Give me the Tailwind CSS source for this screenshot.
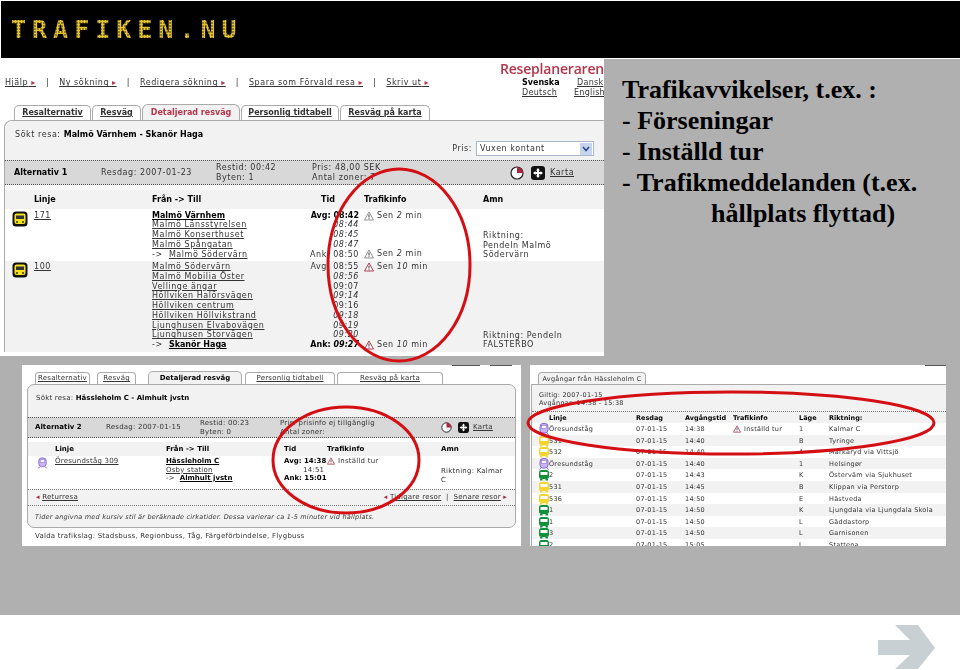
<!DOCTYPE html>
<html lang="sv">
<head>
    <meta charset="UTF-8">
    <title>Trafikavvikelser</title>
    <script src="https://cdn.jsdelivr.net/npm/@tailwindcss/browser@4"></script>
</head>
<body class="bg-white">
    <svg class="hidden" xmlns="http://www.w3.org/2000/svg">
        <symbol id="bus-badge" viewBox="0 0 16 16">
            <rect x="0.5" y="0.5" width="15" height="15" rx="3.5" fill="#111"/>
            <rect x="2.5" y="2.5" width="11" height="10.5" rx="2" fill="#f6e21e"/>
            <rect x="4" y="4.5" width="8" height="3.5" fill="#333"/>
            <circle cx="5" cy="11" r="1" fill="#333"/>
            <circle cx="11" cy="11" r="1" fill="#333"/>
        </symbol>
        <symbol id="bus" viewBox="0 0 12 12">
            <rect x="1" y="1" width="10" height="9" rx="2.5" fill="currentColor"/>
            <rect x="2.5" y="3" width="7" height="3" fill="#fff"/>
            <rect x="2" y="10" width="2.5" height="1.5" fill="currentColor"/>
            <rect x="7.5" y="10" width="2.5" height="1.5" fill="currentColor"/>
        </symbol>
        <symbol id="train" viewBox="0 0 12 12">
            <rect x="2" y="0.5" width="8" height="9.5" rx="3" fill="#c9b6f0" stroke="#8a68d6"/>
            <rect x="3.5" y="2.5" width="5" height="3" fill="#fff" stroke="#8a68d6" stroke-width="0.6"/>
            <path d="M3 10 1.5 11.8M9 10l1.5 1.8" stroke="#8a68d6" fill="none"/>
        </symbol>
        <symbol id="warn" viewBox="0 0 10 10">
            <path d="M5 1 9.5 9h-9z" fill="#fff" stroke="currentColor" stroke-width="0.9"/>
            <path d="M5 3.5v3M5 7.3v.9" stroke="#222" stroke-width="0.9" fill="none"/>
        </symbol>
        <symbol id="clock" viewBox="0 0 14 14">
            <circle cx="7" cy="7" r="6" fill="#fff" stroke="#222" stroke-width="1.2"/>
            <path d="M7 7V1a6 6 0 0 1 6 6z" fill="#a8283c"/>
        </symbol>
        <symbol id="map" viewBox="0 0 14 14">
            <rect width="14" height="14" rx="3" fill="#111"/>
            <path d="M7 2 9 4.500H8V6h1.500V5L12 7 9.500 9V8H8v1.500h1L7 12 5 9.500h1V8H4.500v1L2 7l2.500-2v1H6V4.500H5z" fill="#fff"/>
        </symbol>
    </svg>

    <div class="relative w-[960px] h-[670px] overflow-hidden font-['Liberation_Sans',sans-serif]">
        <header class="h-[57px] mt-px ml-px bg-black flex items-center pl-[10px]">
            <span class="font-['DejaVu_Sans_Mono',monospace] font-bold text-[25px] leading-none tracking-[6px] text-transparent bg-clip-text bg-[radial-gradient(circle,#e6c436_62%,transparent_75%)] bg-[size:3px_3px]">TRAFIKEN.NU</span>
        </header>

        <div class="mt-px h-[556px] bg-[#b0b0b0] font-['DejaVu_Sans',sans-serif] text-[#333]">
            <div class="flex h-[297px]">
                <!-- Reseplaneraren, resa 1 -->
                <section class="w-[604px] shrink-0 bg-white overflow-hidden text-[8px] leading-[9.75px] tracking-[0.55px] blur-[0.35px]">
                    <div class="h-[45px] flex justify-between">
                        <nav class="flex items-end gap-[10px] pl-[5px] pb-[16px] whitespace-nowrap">
                            <a class="underline">Hjälp<span class="text-[#b5354a]"> ▸</span></a><span>|</span>
                            <a class="underline">Ny sökning<span class="text-[#b5354a]"> ▸</span></a><span>|</span>
                            <a class="underline">Redigera sökning<span class="text-[#b5354a]"> ▸</span></a><span>|</span>
                            <a class="underline">Spara som Förvald resa<span class="text-[#b5354a]"> ▸</span></a><span>|</span>
                            <a class="underline">Skriv ut<span class="text-[#b5354a]"> ▸</span></a>
                        </nav>
                        <div class="w-[104px] shrink-0 pt-[2px]">
                            <div class="font-semibold text-[14px] leading-[16px] text-[#b5354a] font-['Open_Sans',sans-serif] whitespace-nowrap tracking-[-0.2px]">Reseplaneraren</div>
                            <div class="grid grid-cols-[55px_1fr] mt-[1px] pl-[22px] leading-[9.5px] tracking-[0.3px]">
                                <span class="font-bold text-black tracking-normal">Svenska</span><a class="underline">Dansk</a>
                                <a class="underline">Deutsch</a><a class="underline -ml-[3px]">English</a>
                            </div>
                        </div>
                    </div>
                    <div class="h-[16px] flex items-end gap-px pl-[14px] font-bold tracking-normal">
                        <a class="w-[77px] h-[15px] flex items-center justify-center border border-b-0 border-[#aaa] rounded-t-[5px] underline">Resalternativ</a>
                        <a class="w-[49px] h-[15px] flex items-center justify-center border border-b-0 border-[#aaa] rounded-t-[5px] underline">Resväg</a>
                        <a class="w-[98px] h-[16px] flex items-center justify-center bg-[#f2f2f2] border border-b-0 border-[#aaa] rounded-t-[6px] text-[#b5354a]">Detaljerad resväg</a>
                        <a class="w-[98px] h-[15px] flex items-center justify-center border border-b-0 border-[#aaa] rounded-t-[5px] underline">Personlig tidtabell</a>
                        <a class="w-[90px] h-[15px] flex items-center justify-center border border-b-0 border-[#aaa] rounded-t-[5px] underline">Resväg på karta</a>
                    </div>
                    <div class="w-[606px] ml-[4px] bg-white border-l border-t border-[#aaa] rounded-tl-[8px] rounded-tr-[8px]">
                        <div class="h-[39px] bg-[#f2f2f2] rounded-tl-[8px] flex justify-between">
                            <p class="pl-[10px] pt-[9px]">Sökt resa: <b class="text-black tracking-normal">Malmö Värnhem - Skanör Haga</b></p>
                            <div class="self-end flex items-center gap-[4px] pb-[4px] pr-[16px]">
                                <span>Pris:</span>
                                <div class="w-[118px] h-[15px] bg-white border border-[#a9b7c9] flex items-center justify-between pl-[3px] pr-px">
                                    <span>Vuxen kontant</span>
                                    <span class="w-[12px] h-[12px] bg-[#c5d5ee] flex items-center justify-center">
                                        <svg width="8" height="6" viewBox="0 0 8 6"><path d="M1 1 4 4.500 7 1" fill="none" stroke="#2b4b8c" stroke-width="1.6"/></svg>
                                    </span>
                                </div>
                            </div>
                        </div>
                        <div class="h-[25px] bg-[#d8d8d8] border-y border-dotted border-[#555] flex items-center pl-[9px]">
                            <b class="w-[87px] text-black tracking-normal">Alternativ 1</b>
                            <span class="w-[115px]">Resdag: 2007-01-23</span>
                            <span class="w-[96px]">Restid: 00:42<br>Byten: 1</span>
                            <span class="w-[198px]">Pris: 48,00 SEK<br>Antal zoner: 7</span>
                            <svg class="w-[14px] h-[14px] mr-[7px]"><use href="#clock"/></svg>
                            <svg class="w-[14px] h-[14px] mr-[5px]"><use href="#map"/></svg>
                            <a class="underline">Karta</a>
                        </div>
                        <div class="h-[5px] bg-[#f8f8f8]"></div>
                        <div class="grid grid-cols-[29px_118px_156px_54px_121px_1fr] h-[19px] items-center bg-[#f2f2f2] font-bold text-black tracking-normal">
                            <span></span><span>Linje</span><span>Från -&gt; Till</span><span class="pl-[13px]">Tid</span><span class="pl-[2px]">Trafikinfo</span><span>Amn</span>
                        </div>
                        <div class="grid grid-cols-[29px_118px_156px_54px_121px_1fr] h-[52px] pt-[1.6px]">
                            <svg class="w-[16px] h-[16px] ml-[7px]"><use href="#bus-badge"/></svg>
                            <a class="underline">171</a>
                            <div class="flex flex-col items-start">
                                <a class="underline font-bold text-black tracking-normal">Malmö Värnhem</a><a class="underline">Malmö Länsstyrelsen</a><a class="underline">Malmö Konserthuset</a><a class="underline">Malmö Spångatan</a>
                                <span>-&gt; &nbsp;<a class="underline">Malmö Södervärn</a></span>
                            </div>
                            <div class="flex flex-col text-right pr-[3px] whitespace-nowrap">
                                <b class="text-black tracking-normal">Avg: 08:42</b><i>08:44</i><i>08:45</i><i>08:47</i><span>Ank: 08:50</span>
                            </div>
                            <div class="flex flex-col pl-[2px]">
                                <span class="flex items-center gap-[3px]"><svg class="w-[10px] h-[10px] text-[#888]"><use href="#warn"/></svg><span>Sen <i>2</i> min</span></span>
                                <span class="mt-auto mb-[2px] flex items-center gap-[3px]"><svg class="w-[10px] h-[10px] text-[#888]"><use href="#warn"/></svg><span>Sen <i>2</i> min</span></span>
                            </div>
                            <div class="flex flex-col justify-end pb-[1px]"><p>Riktning:<br>Pendeln Malmö<br>Södervärn</p></div>
                        </div>
                        <div class="grid grid-cols-[29px_118px_156px_54px_121px_1fr] h-[91px] pt-px bg-[#f2f2f2]">
                            <svg class="w-[16px] h-[16px] ml-[7px]"><use href="#bus-badge"/></svg>
                            <a class="underline">100</a>
                            <div class="flex flex-col items-start">
                                <a class="underline">Malmö Södervärn</a><a class="underline">Malmö Mobilia Öster</a><a class="underline">Vellinge ängar</a><a class="underline">Höllviken Halörsvägen</a><a class="underline">Höllviken centrum</a><a class="underline">Höllviken Höllvikstrand</a><a class="underline">Ljunghusen Elvabovägen</a><a class="underline">Ljunghusen Storvägen</a>
                                <span>-&gt; &nbsp;<a class="underline font-bold text-black tracking-normal">Skanör Haga</a></span>
                            </div>
                            <div class="flex flex-col text-right pr-[3px] whitespace-nowrap">
                                <span>Avg: 08:55</span><i>08:56</i><span>09:07</span><i>09:14</i><span>09:16</span><i>09:18</i><i>09:19</i><i>09:20</i><b class="text-black tracking-normal">Ank: <i>09:27</i></b>
                            </div>
                            <div class="flex flex-col pl-[2px]">
                                <span class="flex items-center gap-[3px]"><svg class="w-[10px] h-[10px] text-[#a8283c]"><use href="#warn"/></svg><span>Sen <i>10</i> min</span></span>
                                <span class="mt-auto mb-[2px] flex items-center gap-[3px]"><svg class="w-[10px] h-[10px] text-[#a8283c]"><use href="#warn"/></svg><span>Sen <i>10</i> min</span></span>
                            </div>
                            <div class="flex flex-col justify-end pb-[2px]"><p>Riktning: Pendeln<br>FALSTERBO</p></div>
                        </div>
                    </div>
                </section>

                <section class="flex-1 pl-[18px] pt-[15px] font-['Liberation_Serif',serif] font-bold text-[26px] leading-[31px] text-black whitespace-nowrap">
                    <p>Trafikavvikelser, t.ex. :</p>
                    <p>- Förseningar</p>
                    <p>- Inställd tur</p>
                    <p>- Trafikmeddelanden (t.ex.</p>
                    <p class="pl-[89px]">hållplats flyttad)</p>
                </section>
            </div>

            <div class="flex gap-[9px] pt-[9px] pl-[22px]">
                <!-- Reseplaneraren, resa 2 -->
                <section class="w-[499px] h-[181px] bg-white px-[5px] text-[7px] leading-[8.5px] tracking-[0.22px] blur-[0.35px]">
                    <div class="flex justify-end gap-[10px] h-px pr-[4px]"><span class="w-[28px] bg-[#555]"></span><span class="w-[22px] bg-[#555]"></span></div>
                    <div class="h-[18px] flex items-end pl-[8px]">
                        <a class="w-[55px] h-[12px] flex items-center justify-center border border-b-0 border-[#aaa] rounded-t-[4px] underline">Resalternativ</a>
                        <a class="w-[39px] h-[12px] ml-[7px] flex items-center justify-center border border-b-0 border-[#aaa] rounded-t-[4px] underline">Resväg</a>
                        <a class="w-[94px] h-[13px] ml-[12px] flex items-center justify-center bg-[#f2f2f2] border border-b-0 border-[#aaa] rounded-t-[5px] font-bold text-black tracking-normal">Detaljerad resväg</a>
                        <a class="w-[90px] h-[12px] ml-[3px] flex items-center justify-center border border-b-0 border-[#aaa] rounded-t-[4px] underline">Personlig tidtabell</a>
                        <a class="w-[106px] h-[12px] ml-[2px] flex items-center justify-center border border-b-0 border-[#aaa] rounded-t-[4px] underline">Resväg på karta</a>
                    </div>
                    <div class="h-[144px] bg-[#f2f2f2] border border-[#aaa] rounded-[7px] overflow-hidden">
                        <div class="h-[32px] pl-[8px] pt-[9px]">Sökt resa: <b class="text-black tracking-normal">Hässleholm C - Almhult jvstn</b></div>
                        <div class="h-[21px] bg-[#d8d8d8] border-y border-dotted border-[#555] flex items-center pl-[7px]">
                            <b class="w-[71px] text-black tracking-normal">Alternativ 2</b>
                            <span class="w-[94px]">Resdag: 2007-01-15</span>
                            <span class="w-[80px]">Restid: 00:23<br>Byten: 0</span>
                            <span class="w-[161px]">Pris: prisinfo ej tillgänglig<br>Antal zoner:</span>
                            <svg class="w-[11px] h-[11px] mr-[6px]"><use href="#clock"/></svg>
                            <svg class="w-[11px] h-[11px] mr-[4px]"><use href="#map"/></svg>
                            <a class="underline">Karta</a>
                        </div>
                        <div class="h-[4px] bg-white"></div>
                        <div class="grid grid-cols-[27px_111px_118px_43px_114px_1fr] h-[14px] items-center font-bold text-black tracking-normal">
                            <span></span><span>Linje</span><span>Från -&gt; Till</span><span>Tid</span><span>Trafikinfo</span><span>Amn</span>
                        </div>
                        <div class="grid grid-cols-[27px_111px_118px_43px_114px_1fr] h-[33px] pt-px bg-white">
                            <svg class="w-[11px] h-[12px] ml-[9px]"><use href="#train"/></svg>
                            <a class="underline">Öresundståg 309</a>
                            <div class="flex flex-col items-start">
                                <a class="underline font-bold text-black tracking-normal">Hässleholm C</a><a class="underline">Osby station</a>
                                <span>-&gt; &nbsp;<a class="underline font-bold text-black tracking-normal">Almhult jvstn</a></span>
                            </div>
                            <div class="flex flex-col whitespace-nowrap">
                                <b class="text-black tracking-normal">Avg: 14:38</b><span class="pl-[19px]">14:51</span><b class="text-black tracking-normal">Ank: 15:01</b>
                            </div>
                            <span class="flex items-start gap-[3px]"><svg class="w-[8px] h-[8px] text-[#a8283c]"><use href="#warn"/></svg><span>Inställd tur</span></span>
                            <div class="flex flex-col justify-end pb-[5px]"><p>Riktning: Kalmar<br>C</p></div>
                        </div>
                        <div class="h-[17px] bg-[#f2f2f2] border-y border-dotted border-[#777] flex items-center justify-between px-[8px]">
                            <span><span class="text-[#a8283c]">◂</span> <a class="underline">Returresa</a></span>
                            <span><span class="text-[#a8283c]">◂</span> <a class="underline">Tidigare resor</a> &nbsp;|&nbsp; <a class="underline">Senare resor</a> <span class="text-[#a8283c]">▸</span></span>
                        </div>
                        <p class="pl-[7px] pt-[7px] italic text-[6.500px] whitespace-nowrap">Tider angivna med kursiv stil är beräknade cirkatider. Dessa varierar ca 1-5 minuter vid hållplats.</p>
                    </div>
                    <p class="pl-[8px] pt-[4px] whitespace-nowrap">Valda trafikslag: Stadsbuss, Regionbuss, Tåg, Färgeförbindelse, Flygbuss</p>
                </section>

                <!-- Avgångar -->
                <section class="w-[416px] h-[181px] bg-white pl-px overflow-hidden text-[6.500px] leading-[8px] tracking-[0.25px] blur-[0.35px]">
                    <div class="flex justify-end h-px"><span class="w-[21px] bg-[#555]"></span></div>
                    <div class="h-[18px] flex items-end pl-[7px]">
                        <a class="w-[108px] h-[12px] flex items-center justify-center bg-[#f2f2f2] border border-b-0 border-[#aaa] rounded-t-[4px]">Avgångar från Hässleholm C</a>
                    </div>
                    <div class="bg-[#f2f2f2] border-t border-l border-[#aaa]">
                        <div class="h-[27px] pl-[7px] pt-[6px] border-b border-dotted border-[#777]">Giltig: 2007-01-15<br>Avgångar: 14:38 - 15:38</div>
                        <div class="grid grid-cols-[17px_87px_49px_48px_66px_30px_1fr] h-[11px] items-center font-bold text-black tracking-normal">
                            <span></span><span>Linje</span><span>Resdag</span><span>Avgångstid</span><span>Trafikinfo</span><span>Läge</span><span>Riktning:</span>
                        </div>
                        <div class="grid grid-cols-[17px_87px_49px_48px_66px_30px_1fr] h-[11.6px] items-center bg-white"><svg class="w-[12px] h-[12px] ml-[6px]"><use href="#train"/></svg><span>Öresundståg</span><span>07-01-15</span><span>14:38</span><span class="flex items-center gap-[3px]"><svg class="w-[8px] h-[8px] text-[#a8283c]"><use href="#warn"/></svg><span>Inställd tur</span></span><span>1</span><span>Kalmar C</span></div>
                        <div class="grid grid-cols-[17px_87px_49px_48px_66px_30px_1fr] h-[11.6px] items-center"><svg class="w-[12px] h-[12px] ml-[6px] text-[#f3d52e]"><use href="#bus"/></svg><span>531</span><span>07-01-15</span><span>14:40</span><span></span><span>B</span><span>Tyringe</span></div>
                        <div class="grid grid-cols-[17px_87px_49px_48px_66px_30px_1fr] h-[11.6px] items-center bg-white"><svg class="w-[12px] h-[12px] ml-[6px] text-[#f3d52e]"><use href="#bus"/></svg><span>532</span><span>07-01-15</span><span>14:40</span><span></span><span>A</span><span>Markaryd via Vittsjö</span></div>
                        <div class="grid grid-cols-[17px_87px_49px_48px_66px_30px_1fr] h-[11.6px] items-center"><svg class="w-[12px] h-[12px] ml-[6px]"><use href="#train"/></svg><span>Öresundståg</span><span>07-01-15</span><span>14:40</span><span></span><span>1</span><span>Helsingør</span></div>
                        <div class="grid grid-cols-[17px_87px_49px_48px_66px_30px_1fr] h-[11.6px] items-center bg-white"><svg class="w-[12px] h-[12px] ml-[6px] text-[#12903a]"><use href="#bus"/></svg><span>2</span><span>07-01-15</span><span>14:43</span><span></span><span>K</span><span>Österväm via Sjukhuset</span></div>
                        <div class="grid grid-cols-[17px_87px_49px_48px_66px_30px_1fr] h-[11.6px] items-center"><svg class="w-[12px] h-[12px] ml-[6px] text-[#f3d52e]"><use href="#bus"/></svg><span>531</span><span>07-01-15</span><span>14:45</span><span></span><span>B</span><span>Klippan via Perstorp</span></div>
                        <div class="grid grid-cols-[17px_87px_49px_48px_66px_30px_1fr] h-[11.6px] items-center bg-white"><svg class="w-[12px] h-[12px] ml-[6px] text-[#f3d52e]"><use href="#bus"/></svg><span>536</span><span>07-01-15</span><span>14:50</span><span></span><span>E</span><span>Hästveda</span></div>
                        <div class="grid grid-cols-[17px_87px_49px_48px_66px_30px_1fr] h-[11.6px] items-center"><svg class="w-[12px] h-[12px] ml-[6px] text-[#12903a]"><use href="#bus"/></svg><span>1</span><span>07-01-15</span><span>14:50</span><span></span><span>K</span><span>Ljungdala via Ljungdala Skola</span></div>
                        <div class="grid grid-cols-[17px_87px_49px_48px_66px_30px_1fr] h-[11.6px] items-center bg-white"><svg class="w-[12px] h-[12px] ml-[6px] text-[#12903a]"><use href="#bus"/></svg><span>1</span><span>07-01-15</span><span>14:50</span><span></span><span>L</span><span>Gäddastorp</span></div>
                        <div class="grid grid-cols-[17px_87px_49px_48px_66px_30px_1fr] h-[11.6px] items-center"><svg class="w-[12px] h-[12px] ml-[6px] text-[#12903a]"><use href="#bus"/></svg><span>3</span><span>07-01-15</span><span>14:50</span><span></span><span>L</span><span>Garnisonen</span></div>
                        <div class="grid grid-cols-[17px_87px_49px_48px_66px_30px_1fr] h-[11.6px] items-center bg-white"><svg class="w-[12px] h-[12px] ml-[6px] text-[#12903a]"><use href="#bus"/></svg><span>2</span><span>07-01-15</span><span>15:05</span><span></span><span>L</span><span>Stattena</span></div>
                    </div>
                </section>
            </div>
        </div>

        <div class="flex justify-end pr-[25px] pt-[10px]">
            <svg width="57" height="44" viewBox="0 0 57 44"><path d="M0 15h32L17 0h23l17 23-17 21H17l15-14H0z" fill="#c8d0d4"/></svg>
        </div>

        <!-- rode ringar ovanpa skarmbilderna -->
        <svg class="absolute inset-0 pointer-events-none" width="960" height="670" fill="none" stroke="#d40f14" stroke-width="3">
            <ellipse cx="399" cy="265" rx="71" ry="96"/>
            <ellipse cx="346" cy="460" rx="73" ry="53"/>
            <ellipse cx="731" cy="423" rx="203" ry="31"/>
        </svg>
    </div>
</body>
</html>
